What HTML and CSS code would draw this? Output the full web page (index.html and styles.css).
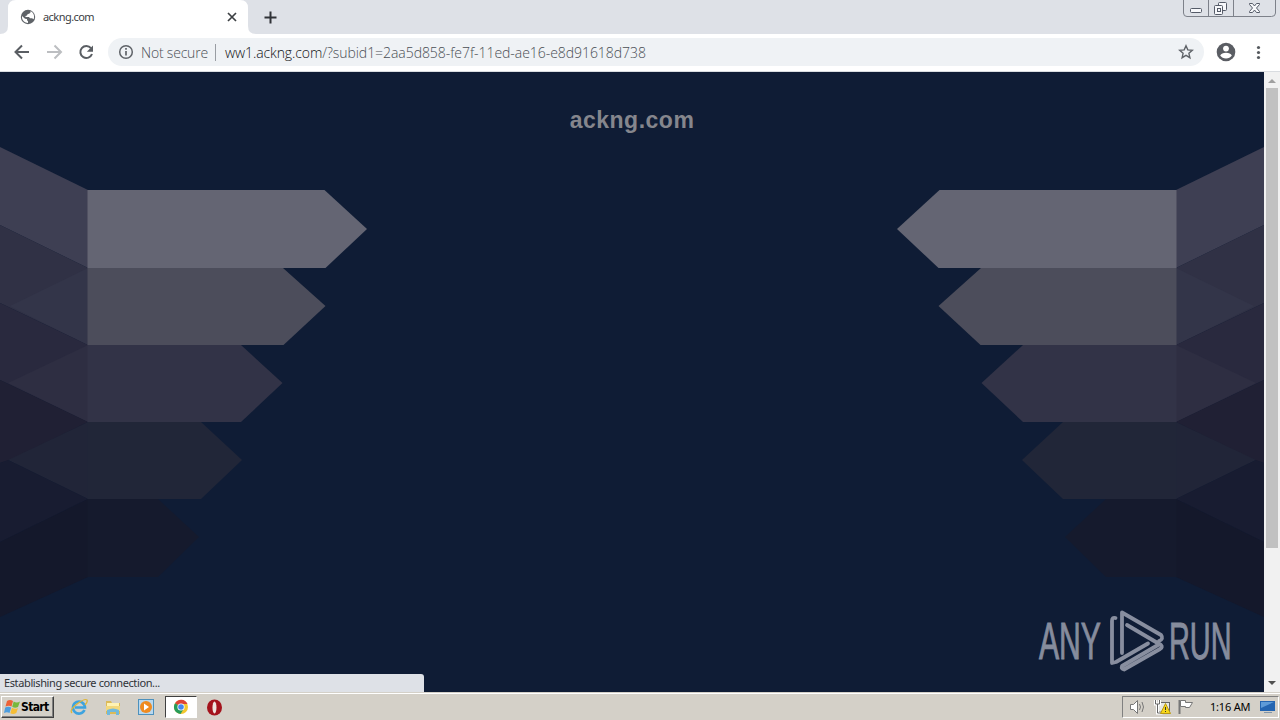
FILE: index.html
```html
<!DOCTYPE html>
<html lang="en">
<head>
<meta charset="utf-8">
<title>ackng.com</title>
<link rel="stylesheet" href="styles.css">
</head>
<body>
<div class="screen">
  <header class="tabstrip">
    <svg class="tab-shape" width="264" height="34" viewBox="0 0 264 34"><path d="M0 34Q8 34 8 26V8Q8 0 16 0H240Q248 0 248 8V26Q248 34 256 34Z" fill="#fff"/></svg>
    <div class="tab">
      <svg width="16" height="16" viewBox="0 0 16 16"><circle cx="8" cy="8" r="7.2" fill="#5f6368"/><path d="M2 7l3 2.8 2 .3v1.2l1 1v1.7Q3 13.5 2 9zM7 2h3l.8 1-1.3 1.5-2 .7L7 6.5 5.5 7v1H9l1 1.3h2l1.7 1Q15 6 12 3L10 2z" fill="#fff"/></svg>
      <span class="tab-title">ackng.com</span>
      <svg width="10" height="10" viewBox="0 0 10 10"><path d="M1 1l8 8M9 1L1 9" stroke="#3c4043" stroke-width="1.7"/></svg>
    </div>
    <svg class="new-tab" width="13" height="13" viewBox="0 0 13 13"><path d="M6.5 .5v12M.5 6.5h12" stroke="#303338" stroke-width="2"/></svg>
    <svg class="win-controls" width="94" height="18" viewBox="0 0 94 18" fill="none" stroke="#7d818a"><path d="M.5 0V13Q.5 16.500 4 16.500H88.500Q92.500 16.500 92.500 13V0M25.500 0V16M50.500 0V16"/><g stroke="#555b68" fill="#f7f8fb"><rect x="7.500" y="8.500" width="11" height="4" rx="1"/><rect x="35.500" y="2.500" width="8" height="8" rx="1"/><rect x="31.500" y="5.500" width="8" height="9" rx="1"/><rect x="34.500" y="8.500" width="3" height="3"/><path d="M66.500 3.500h3l2 2.500 2-2.500h3v1l-3 3.500 3 3.500v1h-3l-2-2.500-2 2.500h-3v-1l3-3.500-3-3.500z"/></g></svg>
  </header>
  <nav class="toolbar">
    <svg class="nav-icons" width="108" height="38" viewBox="0 0 108 38" fill="none" stroke-width="2"><path d="M29 18H16M22 11.500L15.500 18l6.500 6.500" stroke="#5a5e63"/><path d="M47 18h13M54.500 11.500L61 18l-6.500 6.500" stroke="#bcbec1"/><path d="M91 14.200A6 6 0 1 0 92 20" stroke="#5a5e63"/><path d="M93 11.500v6.200h-6.200z" fill="#5a5e63"/></svg>
    <div class="address">
      <svg width="16" height="16" viewBox="0 0 16 16" fill="none" stroke="#5f6368"><circle cx="8" cy="8" r="6.300" stroke-width="1.500"/><path d="M8 7v4.500M8 4v1.700" stroke-width="1.700"/></svg>
      <span class="secure">Not secure</span><i class="divider"></i>
      <span class="url"><b>ww1.ackng.com</b>/?subid1=2aa5d858-fe7f-11ed-ae16-e8d91618d738</span>
      <svg class="star" width="16" height="16" viewBox="0 0 16 16"><path d="M8 1.800l1.800 4.100 4.500.4-3.400 3 1 4.400L8 11.400l-3.900 2.300 1-4.400-3.400-3 4.500-.4z" fill="none" stroke="#5f6368" stroke-width="1.400"/></svg>
    </div>
    <svg class="profile" width="60" height="38" viewBox="0 0 60 38"><circle cx="18" cy="18" r="9.300" fill="#5a5d63"/><circle cx="18" cy="14.600" r="2.900" fill="#fff"/><path d="M12.200 21.600q1.500-2.800 5.800-2.800t5.800 2.800q-2 3-5.800 3t-5.800-3z" fill="#fff"/><g fill="#55595e"><circle cx="50.500" cy="13.500" r="1.600"/><circle cx="50.500" cy="18.500" r="1.600"/><circle cx="50.500" cy="23.500" r="1.600"/></g></svg>
  </nav>
  <div class="viewport">
    <main class="page">
      <svg class="wings" width="1264" height="621" viewBox="0 72 1264 621">
        <defs><g id="wing">
          <path d="M0 147L88 190V268L0 225z" fill="#3e3f53"/>
          <path d="M0 225L88 268V345L0 303z" fill="#303145"/>
          <path d="M88 268L10 306L88 345z" fill="#333549"/>
          <path d="M0 303L88 345V422L0 380z" fill="#29293e"/>
          <path d="M88 345L8 383L88 422z" fill="#2e2e42"/>
          <path d="M0 380L88 422L10 460L0 463z" fill="#202034"/>
          <path d="M88 422L8 460L88 499z" fill="#212538"/>
          <path d="M0 463L8 460L88 499L0 542z" fill="#181c31"/>
          <path d="M0 542L88 499V577L0 617z" fill="#14182b"/>
          <path d="M87.500 190H324.500L367 229L325.500 268H87.500z" fill="#646573"/>
          <path d="M87.500 268H283L325.500 306L283.500 345H87.500z" fill="#4c4d5b"/>
          <path d="M87.500 345H241L282.500 383L241 422H87.500z" fill="#323347"/>
          <path d="M87.500 422H201L242 460L201 499H87.500z" fill="#212638"/>
          <path d="M87.500 499H158L199 537L158 577H87.500z" fill="#151a2d"/>
        </g></defs>
        <use href="#wing"/><use href="#wing" transform="matrix(-1 0 0 1 1264 0)"/>
      </svg>
      <h1 class="domain">ackng.com</h1>
      <svg class="watermark" width="200" height="70" viewBox="1035 605 200 70">
        <g class="brand"><text transform="translate(1039 659) scale(.59 1)" textLength="105" lengthAdjust="spacingAndGlyphs">ANY</text><text transform="translate(1169 659) scale(.59 1)" textLength="106" lengthAdjust="spacingAndGlyphs">RUN</text></g>
        <g fill="none" stroke="#888e9f" stroke-width="3.800" stroke-linejoin="round" stroke-linecap="round"><path d="M1115.500 618Q1112 617 1112 621V663L1116 662L1148 643.500"/><path d="M1122 653V612.500L1161 635Q1164 639 1159 641"/><path d="M1127 625L1161 645Q1163 647 1160 649L1124 669.500Q1121 669 1122 666L1158 645"/></g>
      </svg>
      <div class="status">Establishing secure connection...</div>
    </main>
    <aside class="scrollbar"><i class="arrow up"></i><i class="thumb"></i><i class="arrow down"></i></aside>
  </div>
  <footer class="taskbar">
    <div class="start"><svg width="17" height="16" viewBox="0 0 17 16"><path d="M3 2q3-2 6 0L7.500 7.500Q5 6 1.500 7.500z" fill="#ed6237"/><path d="M9.700 2.400q3 2 6.300 0L14 8Q11 9.500 8.200 7.700z" fill="#78b83c"/><path d="M1.200 8.500q3-1.500 6 0L5.500 14Q3 12.500 0 14z" fill="#4d9dde"/><path d="M8 8.700q3 2 6 .2L12.300 14q-3 2-6 .3z" fill="#f5bd35"/></svg><span>Start</span></div>
    <div class="quick">
      <svg width="18" height="18" viewBox="0 0 18 18" fill="none"><path d="M14.500 12A6 6 0 1 1 15 9.500H5" stroke="#3da3df" stroke-width="2.600"/><path d="M2 15Q-1 12 7 6T17 2Q18 4 15 7" stroke="#dfb638" stroke-width="1.300"/></svg>
      <svg width="18" height="18" viewBox="0 0 18 18"><path d="M2 3h5l1 2h8v11H2z" fill="#dcba58"/><path d="M3 5h12v4H3z" fill="#fff2b3"/><path d="M2 8h14v5H2z" fill="#f3d87c"/><path d="M3 17v-5q6-3 12 0v5h-3v-3H6v3z" fill="#71b9dc"/></svg>
      <svg width="18" height="18" viewBox="0 0 18 18"><rect x="1.500" y="1.500" width="15" height="15" fill="#b9d8ee" stroke="#4d91bd"/><circle cx="9" cy="9" r="6" fill="#ef8b20"/><path d="M7 5.500l5 3.500-5 3.500z" fill="#fff"/></svg>
    </div>
    <div class="active"><svg width="16" height="16" viewBox="0 0 16 16"><circle cx="8" cy="8" r="7" fill="#f3c72f"/><path d="M8 8L2 4.300A7 7 0 0 1 14.500 5H8z" fill="#df4435"/><path d="M8 8L2 4.300A7 7 0 0 0 7.500 15L11 9.500z" fill="#279c5a"/><circle cx="8" cy="8" r="3.600" fill="#fff"/><circle cx="8" cy="8" r="2.800" fill="#4587ee"/></svg></div>
    <svg class="opera" width="17" height="17" viewBox="0 0 17 17"><ellipse cx="8.500" cy="8.500" rx="7.500" ry="8" fill="#a4131c"/><ellipse cx="8.500" cy="8.500" rx="2" ry="6" fill="#eee5df"/></svg>
    <div class="tray">
      <svg width="72" height="20" viewBox="0 0 72 20" fill="none"><path d="M5.500 7.500h3l4-4v13l-4-4h-3z" fill="#fff" stroke="#777"/><path d="M14.500 7q2 3 0 6M17 5q3 5 0 10" stroke="#777"/><g stroke="#666"><rect x="33.500" y="5.500" width="11" height="9" fill="#e6e7e2"/><path d="M30.500 3v4h4V3M32.500 7v9h5" stroke="#fff" stroke-width="3"/><path d="M30.500 3v4h4V3M32.500 7v9h5"/></g><path d="M40.500 6.500l5 10h-10z" fill="#f7d71b" stroke="#b99812"/><path d="M40.500 10v3M40.500 14v1" stroke="#333"/><path d="M54.500 3v14" stroke="#777" stroke-width="2"/><path d="M55.500 3.500h5v2h7l-3 5h-4v-1h-5z" fill="#fff" stroke="#777"/></svg>
      <time>1:16 AM</time>
      <svg class="monitor" width="17" height="14" viewBox="0 0 17 14"><path d="M1 1h15v10H1z" fill="#2465b1"/><path d="M2 2h13L2 8z" fill="#5e9bd8"/><path d="M5 12h8v1H5z" fill="#8195a9"/></svg>
    </div>
  </footer>
</div>
</body>
</html>
```
FILE: styles.css
```css
* { box-sizing: border-box; }
body { margin: 0; overflow: hidden; }
svg { display: block; flex-shrink: 0; }
.screen { width: 1280px; height: 720px; display: flex; flex-direction: column; font-family: "DejaVu Sans Condensed", "DejaVu Sans", sans-serif; background: #fff; }
.tabstrip { height: 34px; flex-shrink: 0; position: relative; display: flex; background: #dee1e7; }
.tab-shape { position: absolute; left: 0; top: 0; }
.tab { width: 248px; height: 34px; padding: 0 11px 0 20px; display: flex; align-items: center; position: relative; }
.tab-title { flex: 1; margin: -2px 0 0 7px; font: 11px "Noto Sans", sans-serif; letter-spacing: -.55px; color: #3c4043; }
.new-tab { margin: 11px 0 0 16px; }
.win-controls { margin-left: auto; margin-right: 3px; }
.toolbar { height: 38px; flex-shrink: 0; display: flex; background: #fff; border-bottom: 1px solid #d9dce0; }
.address { width: 1096px; height: 28px; margin-top: 4px; padding: 0 10px; border-radius: 14px; background: #eff2f5; display: flex; align-items: center; font: 300 14px "Open Sans", sans-serif; }
.secure { width: 67px; margin-left: 7px; color: #4c5056; letter-spacing: -.2px; white-space: nowrap; }
.divider { width: 1px; height: 17px; margin: 0 9px 0 7px; background: #999da3; }
.url { color: #4a4e54; letter-spacing: -.05px; white-space: nowrap; }
.url b { font-weight: 300; color: #101114; letter-spacing: -.1px; }
.star { margin-left: auto; }
.profile { margin-left: 4px; }
.viewport { height: 620px; flex-shrink: 0; display: flex; }
.page { position: relative; width: 1264px; background: #0f1c35; overflow: hidden; }
.wings { position: absolute; left: 0; top: 0; }
.domain { position: relative; margin: 34px 0 0; text-align: center; font: bold 23px/28px "Liberation Sans", sans-serif; letter-spacing: .5px; color: #85868d; }
.watermark { position: absolute; left: 1035px; top: 533px; }
.brand { font: 51px "Liberation Sans Narrow", "Liberation Sans", sans-serif; fill: #868c9d; stroke: #868c9d; stroke-width: 1px; }
.status { position: absolute; left: 0; bottom: 0; width: 424px; height: 18px; padding-left: 4px; border-radius: 0 3px 0 0; background: #dee1e7; color: #303338; font: 11px/18px "Noto Sans", sans-serif; letter-spacing: -.38px; }
.scrollbar { width: 16px; background: #f1f1f1; display: flex; flex-direction: column; align-items: center; }
.arrow { width: 0; height: 0; border-left: 4px solid transparent; border-right: 4px solid transparent; }
.up { margin: 7px 0 5px; border-bottom: 4px solid #a0a0a0; }
.down { margin: auto 0 7px; border-top: 4px solid #505050; }
.thumb { width: 12px; height: 460px; background: #c1c1c1; }
.taskbar { height: 28px; flex-shrink: 0; display: flex; border-top: 1px solid #d4d0c8; background: #d4d0c8; box-shadow: inset 0 1px #fff; }
.start { width: 53px; height: 22px; margin: 3px 0 0 1px; padding-left: 2px; border: 1px solid; border-color: #fff #404040 #404040 #fff; box-shadow: inset -1px -1px #808080; display: flex; align-items: center; font: bold 12px "DejaVu Sans Condensed", sans-serif; letter-spacing: -.65px; color: #000; }
.quick { display: flex; gap: 15.500px; margin: 5px 0 0 16px; }
.active { width: 32px; height: 22px; margin: 3px 0 0 10px; display: grid; place-items: center; background: #fff; border: 1px solid; border-color: #404040 #fff #fff #404040; }
.opera { margin: 6px 0 0 9px; }
.tray { width: 157px; height: 22px; margin: 3px 1px 0 auto; padding-left: 2px; display: flex; align-items: center; border: 1px solid; border-color: #808080 #fff #fff #808080; font: 11px "Noto Sans", sans-serif; color: #000; }
.tray time { width: 42px; margin: -2px 0 0 13px; white-space: nowrap; letter-spacing: -.2px; }
.monitor { margin-left: 7px; }
```
